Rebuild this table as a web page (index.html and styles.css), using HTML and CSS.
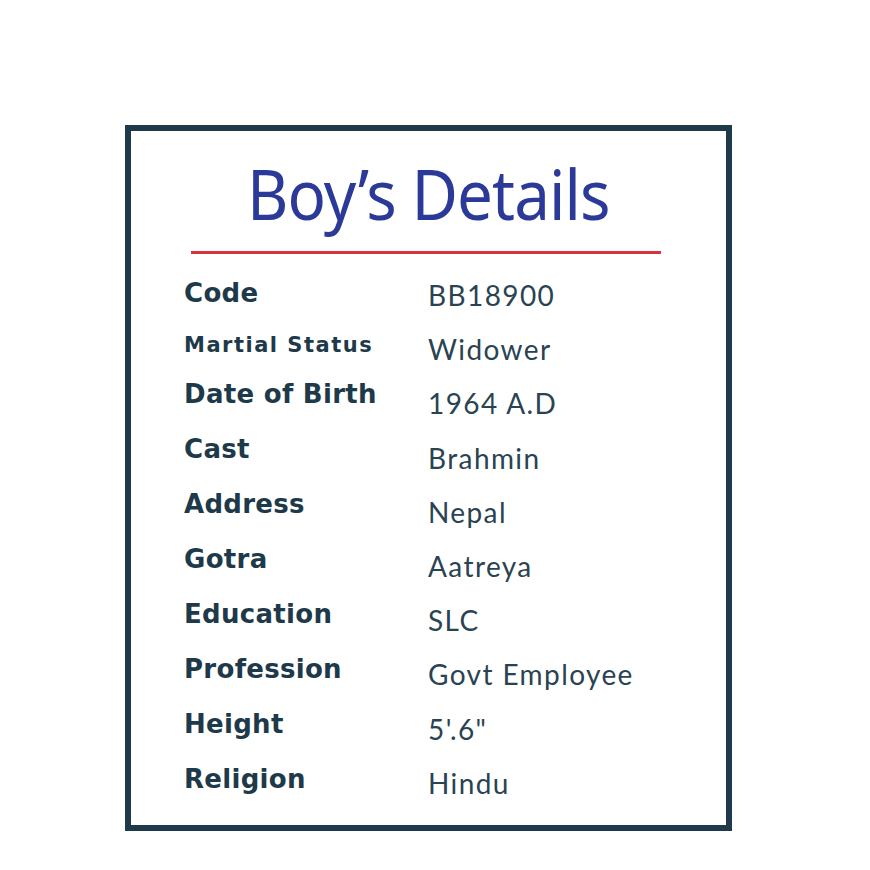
FILE: index.html
```html
<!DOCTYPE html>
<html>
<head>
<meta charset="utf-8">
<link rel="stylesheet" href="styles.css">
</head>
<body>
<div class="card">
  <h1 class="title">Boy’s Details</h1>
  <div class="rule"></div>
  <div class="details">
    <div class="labels">
      <div class="label first">Code</div>
      <div class="label small">Martial Status</div>
      <div class="label">Date of Birth</div>
      <div class="label">Cast</div>
      <div class="label">Address</div>
      <div class="label">Gotra</div>
      <div class="label">Education</div>
      <div class="label">Profession</div>
      <div class="label">Height</div>
      <div class="label">Religion</div>
    </div>
    <div class="values">
      <div class="value">BB18900</div>
      <div class="value">Widower</div>
      <div class="value">1964 A.D</div>
      <div class="value">Brahmin</div>
      <div class="value">Nepal</div>
      <div class="value">Aatreya</div>
      <div class="value">SLC</div>
      <div class="value">Govt Employee</div>
      <div class="value">5'.6"</div>
      <div class="value">Hindu</div>
    </div>
  </div>
</div>
</body>
</html>
```
FILE: styles.css
```css
html, body { margin: 0; padding: 0; background: #fff; }
body { padding: 125px 0 0 125px; }
.card {
  box-sizing: border-box;
  width: 607px;
  height: 706px;
  border: 6px solid #1f3b4b;
  display: flex;
  flex-direction: column;
  align-items: center;
}
.title {
  margin: 22px 0 0 0;
  font-family: "Noto Sans", sans-serif;
  font-weight: 400;
  font-size: 70px;
  line-height: 80px;
  color: #2b3a98;
  letter-spacing: -1px;
  white-space: nowrap;
  transform: scaleX(0.91);
}
.rule {
  width: 470px;
  height: 3px;
  background: #d8323c;
  margin-top: 18px;
  margin-left: -6px;
}
.details {
  align-self: stretch;
  padding: 24px 0 0 53px;
  display: grid;
  grid-template-columns: 244px 1fr;
  color: #1e3a4a;
}
.labels, .values { display: flex; flex-direction: column; }
.label {
  font-family: "DejaVu Sans", sans-serif;
  font-weight: 700;
  font-size: 26px;
  line-height: 30px;
  height: 55px;
  letter-spacing: 0.3px;
}
.label.first { height: 50px; }
.label.small {
  font-size: 21px;
  line-height: 24px;
  padding-top: 5px;
  height: 46px;
  letter-spacing: 1.5px;
}
.values { padding-top: 2px; }
.value {
  font-family: Lato, sans-serif;
  font-weight: 400;
  font-size: 28px;
  line-height: 30px;
  height: 54.2px;
  letter-spacing: 1.4px;
  color: #2a4352;
}
```
